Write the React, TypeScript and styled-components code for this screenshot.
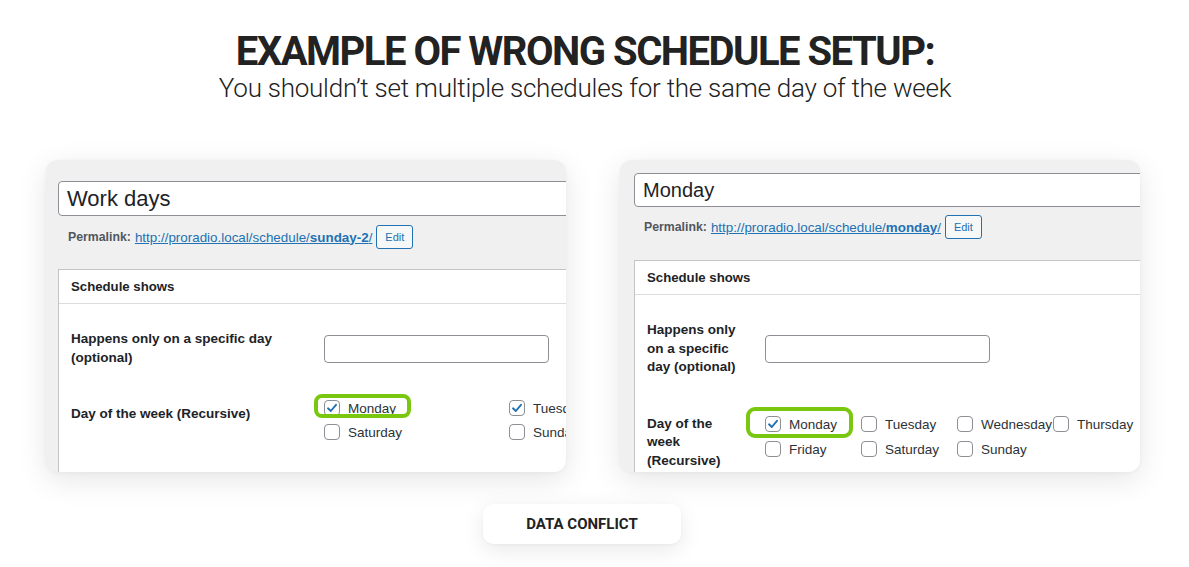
import React from "react";
import styled, { createGlobalStyle } from "styled-components";

const Global = createGlobalStyle`
  html, body { margin: 0; padding: 0; background: #ffffff; }
  * { box-sizing: border-box; }
`;

const Page = styled.div`
  width: 1189px;
  height: 567px;
  display: flex;
  flex-direction: column;
  align-items: center;
  overflow: hidden;
  font-family: "Liberation Sans", Arial, sans-serif;
`;

const Header = styled.header`
  display: flex;
  flex-direction: column;
  align-items: center;
  margin: 31px 19px 0 0;
`;

const Title = styled.h1`
  margin: 0;
  font-family: Roboto, "Liberation Sans", sans-serif;
  font-weight: 700;
  font-size: 40px;
  line-height: 42px;
  letter-spacing: -1.5px;
  color: #222222;
  white-space: nowrap;
`;

const Subtitle = styled.p`
  margin: 0;
  font-family: Roboto, "Liberation Sans", sans-serif;
  font-weight: 300;
  font-size: 26px;
  line-height: 30px;
  letter-spacing: -0.25px;
  color: #222222;
  white-space: nowrap;
`;

const CardsRow = styled.div`
  display: flex;
  gap: 54px;
  margin-top: 57px;
  margin-right: 3px;
`;

const Card = styled.div<{ $padTop: number; $padLeft: number }>`
  width: 520px;
  height: 312px;
  background: #f0f0f1;
  border-radius: 12px;
  overflow: hidden;
  padding: ${(p) => p.$padTop}px 0 0 ${(p) => p.$padLeft}px;
  box-shadow: 0 8px 30px rgba(0, 0, 0, 0.1), 0 1px 4px rgba(0, 0, 0, 0.04);
`;

const Sheet = styled.div`
  width: 700px;
`;

const TitleInput = styled.div<{ $size: number; $h: number }>`
  height: ${(p) => p.$h}px;
  background: #fff;
  border: 1px solid #8c8f94;
  border-radius: 4px;
  padding: 0 8px;
  display: flex;
  align-items: center;
  font-size: ${(p) => p.$size}px;
  color: #1d2327;
`;

const PermalinkRow = styled.div<{ $mt: number }>`
  display: flex;
  align-items: center;
  height: 24px;
  margin-top: ${(p) => p.$mt}px;
  padding-left: 10px;
  gap: 4px;
`;

const PermaLabel = styled.span`
  font-weight: 700;
  font-size: 12.3px;
  color: #50575e;
`;

const PermaLink = styled.a`
  font-size: 13.4px;
  color: #2271b1;
  text-decoration: underline;
  b { font-weight: 700; }
`;

const EditButton = styled.span`
  height: 24px;
  padding: 0 8px;
  display: inline-flex;
  align-items: center;
  border: 1px solid #2271b1;
  border-radius: 3px;
  background: #f6f7f7;
  color: #2271b1;
  font-size: 11px;
`;

const Postbox = styled.div<{ $mt: number }>`
  margin-top: ${(p) => p.$mt}px;
  background: #fff;
  border: 1px solid #c3c4c7;
  height: 300px;
`;

const PostboxHeader = styled.div`
  height: 34px;
  border-bottom: 1px solid #dcdcde;
  padding: 0 12px;
  display: flex;
  align-items: center;
  font-size: 13.2px;
  font-weight: 700;
  color: #1d2327;
`;

const PostboxBody = styled.div`
  padding: 7px 12px 0;
`;

const FormRow = styled.div<{ $labelCol: number; $align: string }>`
  display: grid;
  grid-template-columns: ${(p) => p.$labelCol}px 1fr;
  align-items: ${(p) => p.$align};
`;

const Label = styled.div`
  padding: 19px 10px 19px 0;
  font-size: 13.5px;
  line-height: 18.5px;
  font-weight: 700;
  color: #1d2327;
`;

const Control = styled.div<{ $pt?: number }>`
  padding: ${(p) => p.$pt ?? 0}px 0 0 10px;
`;

const DateInput = styled.div`
  width: 225px;
  height: 28px;
  background: #fff;
  border: 1px solid #8c8f94;
  border-radius: 4px;
`;

const DaysGrid = styled.div<{ $cols: number; $colW: number; $rowH: number }>`
  display: grid;
  grid-template-columns: repeat(${(p) => p.$cols}, ${(p) => p.$colW}px);
  grid-auto-rows: ${(p) => p.$rowH}px;
`;

type HL = { left: number; top: number; width: number; height: number; r: number; b: number };

const DayItem = styled.label<{ $hl?: HL }>`
  position: relative;
  display: flex;
  align-items: center;
  gap: 8px;
  white-space: nowrap;
  font-size: 13.5px;
  color: #2c3338;
  ${(p) =>
    p.$hl
      ? `&::before {
    content: "";
    position: absolute;
    left: ${p.$hl.left}px;
    top: ${p.$hl.top}px;
    width: ${p.$hl.width}px;
    height: ${p.$hl.height}px;
    border: ${p.$hl.b}px solid #79c70f;
    border-radius: ${p.$hl.r}px;
    box-sizing: border-box;
  }`
      : ""}
`;

const Box = styled.span`
  width: 16px;
  height: 16px;
  flex: 0 0 16px;
  border: 1px solid #8c8f94;
  border-radius: 4px;
  background: #fff;
  display: inline-flex;
  align-items: center;
  justify-content: center;
`;

const Badge = styled.div`
  margin-top: 32px;
  margin-right: 25px;
  width: 198px;
  height: 40px;
  border-radius: 10px;
  background: #fff;
  box-shadow: 0 6px 22px rgba(0, 0, 0, 0.09), 0 1px 3px rgba(0, 0, 0, 0.04);
  display: flex;
  align-items: center;
  justify-content: center;
  font-family: Roboto, "Liberation Sans", sans-serif;
  font-weight: 700;
  font-size: 15px;
  color: #222;
`;

const Check = () => (
  <svg width="12" height="12" viewBox="0 0 12 12">
    <path d="M2 6.3 L4.8 9 L10 2.8" fill="none" stroke="#2271b1" strokeWidth="1.9" strokeLinecap="round" strokeLinejoin="round" />
  </svg>
);

type Day = { name: string; checked?: boolean; hl?: HL };

type PanelProps = {
  title: string;
  titleSize: number;
  titleH: number;
  padTop: number;
  padLeft: number;
  permaMt: number;
  boxMt: number;
  slugBase: string;
  slug: string;
  labelCol: number;
  happens: React.ReactNode;
  dayLabel: React.ReactNode;
  cols: number;
  colW: number;
  rowH: number;
  daysPt: number;
  days: Day[];
};

const Panel = (p: PanelProps) => (
  <Card $padTop={p.padTop} $padLeft={p.padLeft}>
    <Sheet>
      <TitleInput $size={p.titleSize} $h={p.titleH}>{p.title}</TitleInput>
      <PermalinkRow $mt={p.permaMt}>
        <PermaLabel>Permalink:</PermaLabel>
        <PermaLink>
          {p.slugBase}
          <b>{p.slug}</b>/
        </PermaLink>
        <EditButton>Edit</EditButton>
      </PermalinkRow>
      <Postbox $mt={p.boxMt}>
        <PostboxHeader>Schedule shows</PostboxHeader>
        <PostboxBody>
          <FormRow $labelCol={p.labelCol} $align="center">
            <Label>{p.happens}</Label>
            <Control>
              <DateInput />
            </Control>
          </FormRow>
          <FormRow $labelCol={p.labelCol} $align="start">
            <Label>{p.dayLabel}</Label>
            <Control $pt={p.daysPt}>
              <DaysGrid $cols={p.cols} $colW={p.colW} $rowH={p.rowH}>
                {p.days.map((d) => (
                  <DayItem key={d.name} $hl={d.hl}>
                    <Box>{d.checked ? <Check /> : null}</Box>
                    {d.name}
                  </DayItem>
                ))}
              </DaysGrid>
            </Control>
          </FormRow>
        </PostboxBody>
      </Postbox>
    </Sheet>
  </Card>
);

const leftDays: Day[] = [
  { name: "Monday", checked: true, hl: { left: -10, top: -2, width: 97, height: 24, r: 8, b: 4 } },
  { name: "Tuesday", checked: true },
  { name: "Wednesday" },
  { name: "Thursday" },
  { name: "Friday" },
  { name: "Saturday" },
  { name: "Sunday" },
];

const rightDays: Day[] = [
  { name: "Monday", checked: true, hl: { left: -19, top: -5, width: 107, height: 31, r: 9, b: 4 } },
  { name: "Tuesday" },
  { name: "Wednesday" },
  { name: "Thursday" },
  { name: "Friday" },
  { name: "Saturday" },
  { name: "Sunday" },
];

export default function App() {
  return (
    <Page>
      <Global />
      <Header>
        <Title>EXAMPLE OF WRONG SCHEDULE SETUP:</Title>
        <Subtitle>You shouldn’t set multiple schedules for the same day of the week</Subtitle>
      </Header>
      <CardsRow>
        <Panel
          title="Work days"
          titleSize={22}
          titleH={35}
          padTop={21}
          padLeft={12}
          permaMt={9}
          boxMt={20}
          slugBase="http://proradio.local/schedule/"
          slug="sunday-2"
          labelCol={243}
          happens="Happens only on a specific day (optional)"
          dayLabel="Day of the week (Recursive)"
          cols={5}
          colW={185}
          rowH={24}
          daysPt={10}
          days={leftDays}
        />
        <Panel
          title="Monday"
          titleSize={20}
          titleH={34}
          padTop={13}
          padLeft={14}
          permaMt={8}
          boxMt={21}
          slugBase="http://proradio.local/schedule/"
          slug="monday"
          labelCol={108}
          happens="Happens only on a specific day (optional)"
          dayLabel="Day of the week (Recursive)"
          cols={4}
          colW={96}
          rowH={25}
          daysPt={16}
          days={rightDays}
        />
      </CardsRow>
      <Badge>DATA CONFLICT</Badge>
    </Page>
  );
}
